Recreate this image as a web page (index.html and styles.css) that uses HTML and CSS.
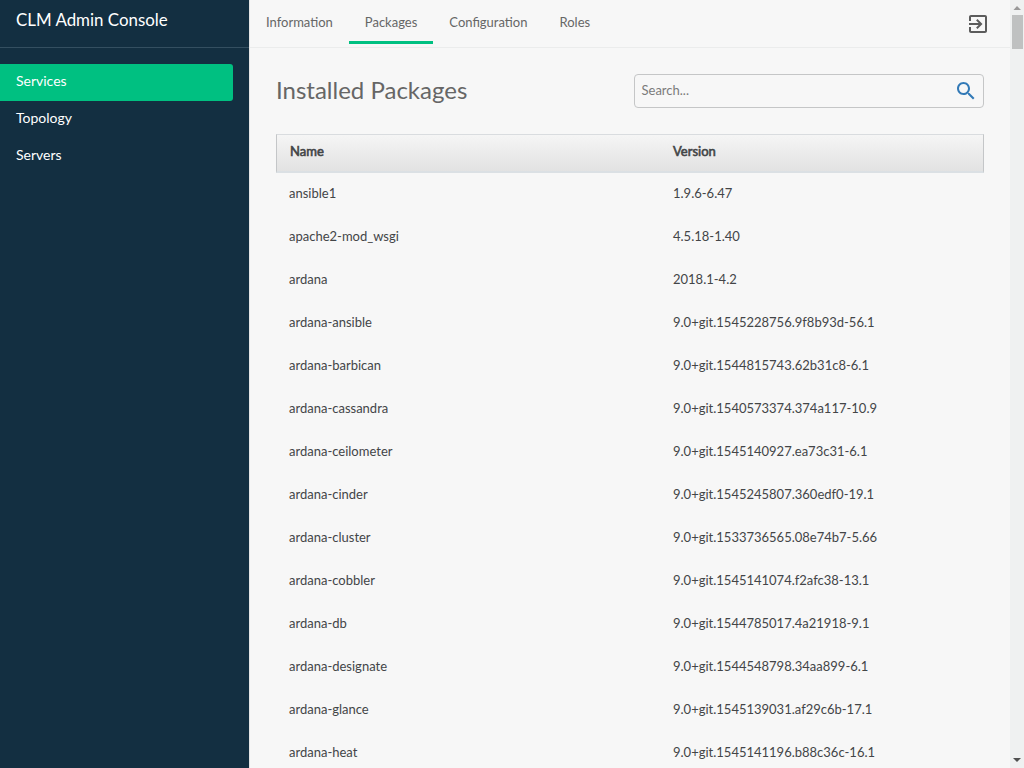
FILE: index.html
```html
<!DOCTYPE html>
<html lang="en">
<head>
<meta charset="utf-8">
<title>CLM Admin Console</title>
<link rel="stylesheet" href="styles.css">
</head>
<body>
<div class="app">
  <aside class="sidebar">
    <div class="brand"><span>CLM Admin Console</span></div>
    <nav class="side-nav">
      <a class="side-item active"><span>Services</span></a>
      <a class="side-item"><span>Topology</span></a>
      <a class="side-item"><span>Servers</span></a>
    </nav>
  </aside>
  <div class="main">
    <header class="topbar">
      <nav class="tabs">
        <a class="tab tab-info"><span>Information</span></a>
        <a class="tab tab-packages active"><span>Packages</span></a>
        <a class="tab tab-config"><span>Configuration</span></a>
        <a class="tab tab-roles"><span>Roles</span></a>
      </nav>
      <svg class="logout" viewBox="0 0 24 24"><path d="M10.09 15.59L11.5 17l5-5-5-5-1.41 1.41L12.67 11H3v2h9.67l-2.58 2.59zM19 3H5c-1.11 0-2 .9-2 2v4h2V5h14v14H5v-4H3v4c0 1.1.89 2 2 2h14c1.1 0 2-.9 2-2V5c0-1.1-.9-2-2-2z"/></svg>
    </header>
    <main class="content">
      <div class="heading">
        <h1>Installed Packages</h1>
        <div class="search"><span>Search...</span>
          <svg class="search-icon" viewBox="0 0 24 24"><path d="M15.5 14h-.79l-.28-.27C15.41 12.59 16 11.11 16 9.5 16 5.91 13.09 3 9.5 3S3 5.91 3 9.5 5.91 16 9.5 16c1.61 0 3.09-.59 4.23-1.57l.27.28v.79l5 4.99L20.49 19l-4.99-5zm-6 0C7.01 14 5 11.99 5 9.5S7.01 5 9.5 5 14 7.01 14 9.5 11.99 14 9.5 14z"/></svg>
        </div>
      </div>
      <div class="table">
        <div class="thead"><b>Name</b><b>Version</b></div>
        <div class="row"><span>ansible1</span><span>1.9.6-6.47</span></div>
        <div class="row"><span>apache2-mod_wsgi</span><span>4.5.18-1.40</span></div>
        <div class="row"><span>ardana</span><span>2018.1-4.2</span></div>
        <div class="row"><span>ardana-ansible</span><span>9.0+git.1545228756.9f8b93d-56.1</span></div>
        <div class="row"><span>ardana-barbican</span><span>9.0+git.1544815743.62b31c8-6.1</span></div>
        <div class="row"><span>ardana-cassandra</span><span>9.0+git.1540573374.374a117-10.9</span></div>
        <div class="row"><span>ardana-ceilometer</span><span>9.0+git.1545140927.ea73c31-6.1</span></div>
        <div class="row"><span>ardana-cinder</span><span>9.0+git.1545245807.360edf0-19.1</span></div>
        <div class="row"><span>ardana-cluster</span><span>9.0+git.1533736565.08e74b7-5.66</span></div>
        <div class="row"><span>ardana-cobbler</span><span>9.0+git.1545141074.f2afc38-13.1</span></div>
        <div class="row"><span>ardana-db</span><span>9.0+git.1544785017.4a21918-9.1</span></div>
        <div class="row"><span>ardana-designate</span><span>9.0+git.1544548798.34aa899-6.1</span></div>
        <div class="row"><span>ardana-glance</span><span>9.0+git.1545139031.af29c6b-17.1</span></div>
        <div class="row"><span>ardana-heat</span><span>9.0+git.1545141196.b88c36c-16.1</span></div>
      </div>
    </main>
  </div>
  <div class="scrollbar">
    <svg class="arrow" viewBox="0 0 14 15"><path d="M3.5 10L7 6l4 4z" fill="#999"/></svg>
    <div class="thumb"></div>
    <svg class="arrow arrow-down" viewBox="0 0 14 15"><path d="M3 5h8L7 9z" fill="#505050"/></svg>
  </div>
</div>
</body>
</html>
```
FILE: styles.css
```css
* { box-sizing: border-box; }
body {
  margin: 0;
  height: 768px;
  overflow: hidden;
  font-family: Lato, sans-serif;
  font-size: 13px;
  background: #f7f7f7;
  color: #434547;
}
.app { display: flex; height: 768px; overflow: hidden; }
.sidebar { width: 249px; background: #132f41; color: #fff; flex: none; }
.brand {
  height: 48px;
  padding: 8px 16px 0;
  border-bottom: 1px solid #344f60;
  font-size: 16.9px;
  line-height: 24px;
}
.side-nav { padding: 16px 16px 0 0; }
.side-item {
  display: block;
  height: 37px;
  padding: 7px 16px;
  font-size: 14px;
  line-height: 20px;
}
.side-item.active { background: #00c081; border-radius: 0 3px 3px 0; }
.main { flex: 1; min-width: 0; border-left: 1px solid #e4e5e5; }
.topbar {
  height: 48px;
  display: flex;
  justify-content: space-between;
  border-bottom: 1px solid #ebecec;
}
.tabs { display: flex; color: #666; }
.tab { height: 44px; padding: 12px 16px 0; line-height: 20px; white-space: nowrap; }
.tab.active { border-bottom: 3px solid #00c081; }
.logout { width: 24px; height: 24px; margin: 12px 20px 0 0; fill: #5c5c5c; }
.content { padding: 26px 26px 0; }
.heading { display: flex; justify-content: space-between; height: 60px; }
h1 { margin: 0; font-size: 24px; font-weight: 400; line-height: 32px; color: #666; }
.search {
  width: 350px;
  height: 34px;
  display: flex;
  justify-content: space-between;
  padding: 4px 6px 2px;
  border: 1px solid #c5c6c7;
  border-radius: 4px;
  color: #7b7b7b;
}
.search span { line-height: 22px; padding-left: 0.5px; }
.search-icon { width: 24px; height: 24px; margin-right: -0.5px; fill: #337ab7; }
.thead, .row { display: grid; grid-template-columns: 384px 1fr; }
.thead {
  grid-template-columns: 383px 1fr;
  height: 39px;
  padding: 6px 13px 0;
  line-height: 20px;
  border: 1px solid #c4c6c8;
  border-top-color: #d9dcdf;
  border-bottom: 2px solid #dbe0e4;
  background: linear-gradient(#f5f5f5, #e2e2e2);
}
.thead b { font-weight: 400; -webkit-text-stroke: 0.6px currentColor; }
.row { height: 43px; padding: 10px 13px 0; line-height: 20px; }
.scrollbar { width: 14px; background: #eff1f1; display: flex; flex-direction: column; flex: none; }
.arrow { width: 14px; height: 15px; flex: none; }
.thumb { width: 11px; height: 34px; margin-left: 2px; background: #bfc1c1; }
.arrow-down { margin-top: auto; }
```
